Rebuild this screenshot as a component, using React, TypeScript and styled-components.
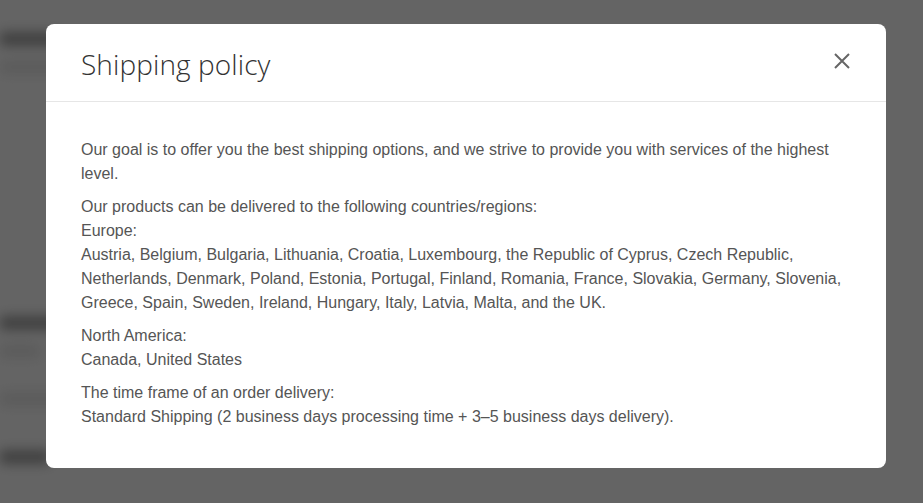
import React from "react"
import styled, { createGlobalStyle } from "styled-components"

const GlobalStyle = createGlobalStyle`
  html, body {
    margin: 0;
    padding: 0;
    height: 100%;
  }
  body {
    font-family: "Liberation Sans", Arial, sans-serif;
    background: #fff;
    overflow: hidden;
  }
`

const Page = styled.div`
  position: relative;
  width: 923px;
  height: 503px;
  overflow: hidden;
  background: #fafafa;
`

const BackPage = styled.div`
  filter: blur(6px);
  padding: 32px 0 0 0;
  display: flex;
  flex-direction: column;
  gap: 14px;
`

const BackLine = styled.div<{ w: number; top?: number; dark?: boolean }>`
  width: ${p => p.w}px;
  height: 14px;
  margin-top: ${p => p.top || 0}px;
  background: ${p => (p.dark ? "#a0a0a0" : "#e4e4e4")};
  border-radius: 3px;
`

const Overlay = styled.div`
  position: absolute;
  inset: 0;
  background: rgba(0, 0, 0, 0.6);
  display: flex;
  align-items: flex-start;
  justify-content: flex-start;
  padding: 24px 0 0 46px;
`

const Modal = styled.div`
  width: 840px;
  background: #fff;
  border-radius: 8px;
  display: flex;
  flex-direction: column;
`

const Header = styled.div`
  height: 77px;
  border-bottom: 1px solid #e6e6e6;
  display: flex;
  align-items: center;
  justify-content: space-between;
  padding: 0 32px 0 35px;
`

const Title = styled.h2`
  margin: 0;
  font-family: "Open Sans", sans-serif;
  font-weight: 300;
  font-size: 28px;
  letter-spacing: 0.1px;
  color: #333;
  margin-top: 2px;
`

const CloseBtn = styled.button`
  border: 0;
  background: none;
  padding: 0;
  width: 24px;
  height: 24px;
  display: flex;
  align-items: center;
  justify-content: center;
  margin-top: -4px;
  cursor: pointer;
`

const Body = styled.div`
  padding: 36px 35px 39px 35px;
  color: #555;
  font-size: 16px;
  line-height: 24px;
`

const Para = styled.p`
  margin: 0 0 9px 0;
  &:last-child {
    margin-bottom: 0;
  }
`

export default function App() {
  return (
    <>
      <GlobalStyle />
      <Page>
        <BackPage>
          <BackLine w={60} dark />
          <BackLine w={140} />
          <BackLine w={0} top={160} />
          <BackLine w={90} dark top={40} />
          <BackLine w={40} />
          <BackLine w={70} top={20} />
          <BackLine w={50} top={30} dark />
        </BackPage>
        <Overlay>
          <Modal>
            <Header>
              <Title>Shipping policy</Title>
              <CloseBtn aria-label="Close">
                <svg width="18" height="18" viewBox="0 0 18 18">
                  <path d="M2 2 L16 16 M16 2 L2 16" stroke="#666" strokeWidth="2" />
                </svg>
              </CloseBtn>
            </Header>
            <Body>
              <Para>
                Our goal is to offer you the best shipping options, and we strive to provide you with services of the highest level.
              </Para>
              <Para>
                Our products can be delivered to the following countries/regions:
                <br />
                Europe:
                <br />
                Austria, Belgium, Bulgaria, Lithuania, Croatia, Luxembourg, the Republic of Cyprus, Czech Republic, Netherlands, Denmark, Poland, Estonia, Portugal, Finland, Romania, France, Slovakia, Germany, Slovenia, Greece, Spain, Sweden, Ireland, Hungary, Italy, Latvia, Malta, and the UK.
              </Para>
              <Para>
                North America:
                <br />
                Canada, United States
              </Para>
              <Para>
                The time frame of an order delivery:
                <br />
                Standard Shipping (2 business days processing time + 3–5 business days delivery).
              </Para>
            </Body>
          </Modal>
        </Overlay>
      </Page>
    </>
  )
}
